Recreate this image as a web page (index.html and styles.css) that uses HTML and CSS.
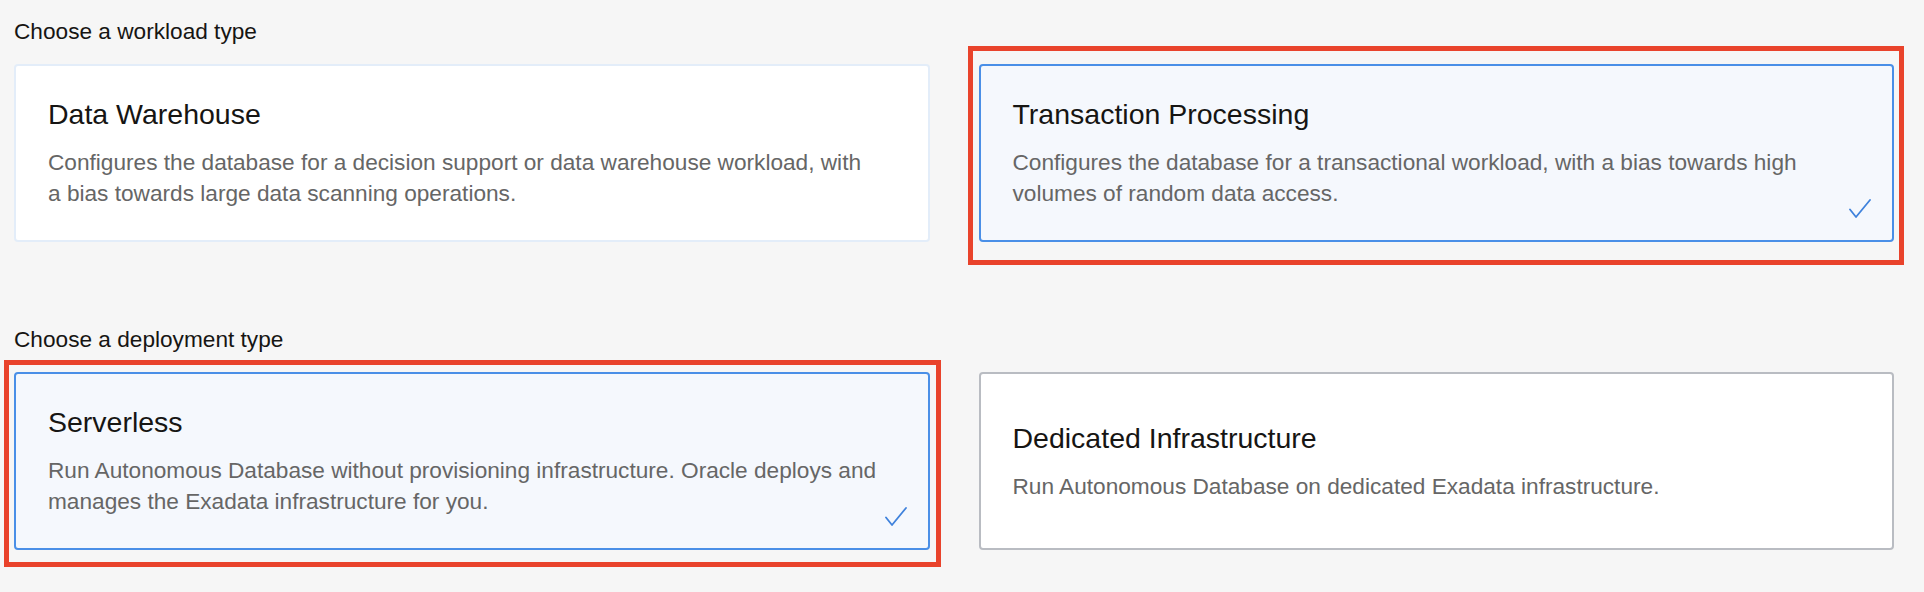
FILE: index.html
```html
<!DOCTYPE html>
<html lang="en">
<head>
<meta charset="utf-8">
<title>Choose workload and deployment type</title>
<link rel="stylesheet" href="styles.css">
</head>
<body>
<main class="page">
  <section class="group">
    <h2 class="group-label">Choose a workload type</h2>
    <div class="options">
      <div class="option">
        <h3 class="option-title">Data Warehouse</h3>
        <p class="option-desc">Configures the database for a decision support or data warehouse workload, with a bias towards large data scanning operations.</p>
      </div>
      <div class="option option--selected">
        <span class="annotation annotation--workload"></span>
        <h3 class="option-title">Transaction Processing</h3>
        <p class="option-desc">Configures the database for a transactional workload, with a bias towards high volumes of random data access.</p>
        <svg class="check" viewBox="0 0 22 19" width="22" height="19" aria-hidden="true"><polyline points="1,10.5 7,18 21,1" fill="none" stroke="#3f82dc" stroke-width="1.8" stroke-linecap="round" stroke-linejoin="round"/></svg>
      </div>
    </div>
  </section>
  <section class="group">
    <h2 class="group-label">Choose a deployment type</h2>
    <div class="options">
      <div class="option option--selected">
        <span class="annotation annotation--deploy"></span>
        <h3 class="option-title">Serverless</h3>
        <p class="option-desc">Run Autonomous Database without provisioning infrastructure. Oracle deploys and manages the Exadata infrastructure for you.</p>
        <svg class="check" viewBox="0 0 22 19" width="22" height="19" aria-hidden="true"><polyline points="1,10.5 7,18 21,1" fill="none" stroke="#3f82dc" stroke-width="1.8" stroke-linecap="round" stroke-linejoin="round"/></svg>
      </div>
      <div class="option option--plain">
        <h3 class="option-title">Dedicated Infrastructure</h3>
        <p class="option-desc">Run Autonomous Database on dedicated Exadata infrastructure.</p>
      </div>
    </div>
  </section>
</main>
</body>
</html>
```

FILE: styles.css
```css
html, body {
  margin: 0;
  padding: 0;
  background: #f6f6f6;
}

body {
  min-height: 100vh;
  font-family: "Liberation Sans", Arial, Helvetica, sans-serif;
  color: #161513;
}

.page {
  padding: 17px 30px 42px 14px;
}

.group + .group {
  margin-top: 83px;
}

.group-label {
  margin: 0 0 19px;
  font-size: 22.65px;
  line-height: 28px;
  font-weight: 400;
  color: #161513;
}

.options {
  display: grid;
  grid-template-columns: 1fr 1fr;
  column-gap: 49px;
}

.option {
  position: relative;
  box-sizing: border-box;
  height: 178px;
  display: flex;
  flex-direction: column;
  justify-content: center;
  padding: 0 40px 0 32px;
  background: #ffffff;
  border: 2px solid #e3edf9;
  border-radius: 4px;
}

.option--selected {
  background: #f5f8fd;
  border-color: #4a8fe7;
}

.option--plain {
  border-color: #b9bcc2;
}

.option-title {
  margin: 0 0 16px;
  font-size: 28.5px;
  line-height: 34px;
  font-weight: 400;
  color: #161513;
}

.option-desc {
  margin: 0;
  max-width: 830px;
  font-size: 22.65px;
  line-height: 31px;
  color: #666666;
}

.check {
  position: absolute;
  right: 21px;
  bottom: 22px;
  display: block;
}

.annotation {
  position: absolute;
  border: 5px solid #e9432b;
  pointer-events: none;
}

.annotation--workload {
  left: -13px;
  top: -20px;
  right: -12px;
  bottom: -25px;
}

.annotation--deploy {
  left: -12px;
  top: -14px;
  right: -13px;
  bottom: -19px;
}
```
